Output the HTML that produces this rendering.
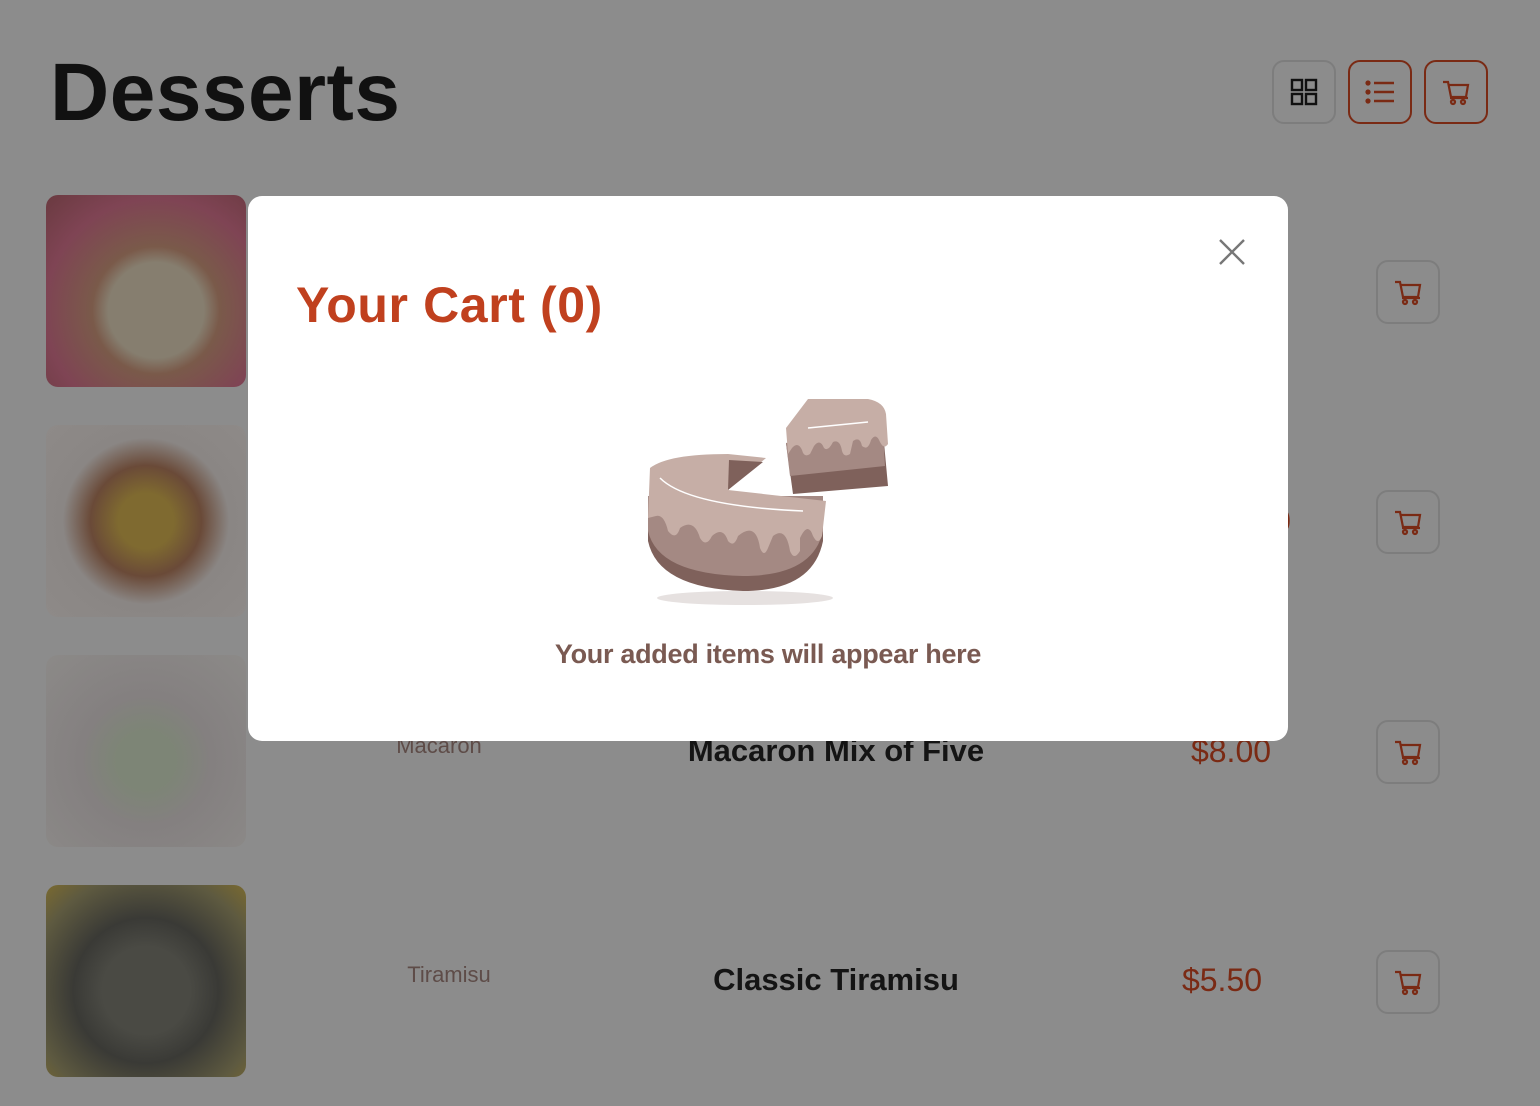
<!DOCTYPE html>
<html><head><meta charset="utf-8"><style>
*{margin:0;padding:0;box-sizing:border-box}
body{width:1540px;height:1106px;background:#8c8c8c;font-family:"Liberation Sans",sans-serif;position:relative;overflow:hidden}
h1{position:absolute;left:50px;top:46px;font-size:82px;font-weight:bold;color:#111;letter-spacing:0.5px}
.tb{position:absolute;top:60px;width:64px;height:64px;border-radius:12px;border:2px solid #7a2a14;display:flex;align-items:center;justify-content:center}
.img{position:absolute;left:46px;width:200px;height:192px;border-radius:12px}
.cb{position:absolute;left:1376px;width:64px;height:64px;border-radius:12px;border:2px solid #7d7d7d;display:flex;align-items:center;justify-content:center}
.cat{position:absolute;font-size:22px;color:#5e4c48;transform:translateX(-50%)}
.nm{position:absolute;font-size:31px;font-weight:bold;color:#141414;transform:translateX(-50%)}
.pr{position:absolute;font-size:32px;color:#7a2a14;transform:translateX(-50%)}
.modal{position:absolute;left:248px;top:196px;width:1040px;height:545px;background:#fff;border-radius:14px}
</style></head><body>
<h1>Desserts</h1>
<div class="tb" style="left:1272px;border-color:#7d7d7d"><svg width="30" height="30" viewBox="0 0 30 30" fill="none" stroke="#111" stroke-width="2.4"><rect x="3" y="3" width="10" height="10"/><rect x="17" y="3" width="10" height="10"/><rect x="3" y="17" width="10" height="10"/><rect x="17" y="17" width="10" height="10"/></svg></div>
<div class="tb" style="left:1348px"><svg width="32" height="30" viewBox="0 0 32 30" fill="#7a2a14" stroke="#7a2a14" stroke-width="2.4"><circle cx="4" cy="6" r="1.4"/><circle cx="4" cy="15" r="1.4"/><circle cx="4" cy="24" r="1.4"/><path d="M10 6h20M10 15h20M10 24h20" fill="none"/></svg></div>
<div class="tb" style="left:1424px"><svg width="30" height="30" viewBox="0 0 30 30" fill="none" stroke="#7a2a14" stroke-width="2.2"><path d="M2 5h5l3 15h15l2-12H8"/><path d="M9 21h18"/><circle cx="12" cy="25" r="2"/><circle cx="22" cy="25" r="2"/></svg></div>

<div class="img" style="top:195px;background:radial-gradient(circle at 55% 60%,#867e6f 0 30%,#7a5a4a 40%,#7f4454 70%,#6a3a40)"></div>
<div class="img" style="top:425px;background:radial-gradient(circle at 50% 50%,#7f6a30 0 20%,#6a4a38 40%,#8a8684 60%,#8e8a88)"></div>
<div class="img" style="top:655px;background:radial-gradient(circle at 50% 55%,#7d8576 0 20%,#848080 45%,#8c8a88)"></div>
<div class="img" style="top:885px;background:radial-gradient(circle at 50% 55%,#4a4a44 0 30%,#3a3a36 50%,#5e5a40 80%,#7a6a30)"></div>

<div class="cb" style="top:260px"><svg width="30" height="30" viewBox="0 0 30 30" fill="none" stroke="#7a2a14" stroke-width="2.2"><path d="M2 5h5l3 15h15l2-12H8"/><path d="M9 21h18"/><circle cx="12" cy="25" r="2"/><circle cx="22" cy="25" r="2"/></svg></div>
<div class="cb" style="top:490px"><svg width="30" height="30" viewBox="0 0 30 30" fill="none" stroke="#7a2a14" stroke-width="2.2"><path d="M2 5h5l3 15h15l2-12H8"/><path d="M9 21h18"/><circle cx="12" cy="25" r="2"/><circle cx="22" cy="25" r="2"/></svg></div>
<div class="cb" style="top:720px"><svg width="30" height="30" viewBox="0 0 30 30" fill="none" stroke="#7a2a14" stroke-width="2.2"><path d="M2 5h5l3 15h15l2-12H8"/><path d="M9 21h18"/><circle cx="12" cy="25" r="2"/><circle cx="22" cy="25" r="2"/></svg></div>
<div class="cb" style="top:950px"><svg width="30" height="30" viewBox="0 0 30 30" fill="none" stroke="#7a2a14" stroke-width="2.2"><path d="M2 5h5l3 15h15l2-12H8"/><path d="M9 21h18"/><circle cx="12" cy="25" r="2"/><circle cx="22" cy="25" r="2"/></svg></div>

<div class="pr" style="left:1282px;top:503px">0</div>
<div class="cat" style="left:439px;top:733px">Macaron</div>
<div class="nm" style="left:836px;top:733px">Macaron Mix of Five</div>
<div class="pr" style="left:1231px;top:733px">$8.00</div>
<div class="cat" style="left:449px;top:962px">Tiramisu</div>
<div class="nm" style="left:836px;top:962px">Classic Tiramisu</div>
<div class="pr" style="left:1222px;top:962px">$5.50</div>

<div class="modal">
<svg style="position:absolute;left:970px;top:42px" width="28" height="28" viewBox="0 0 28 28" stroke="#777" stroke-width="2.4"><path d="M2 2l24 24M26 2L2 26"/></svg>
<div style="position:absolute;left:48px;top:80px;font-size:50px;font-weight:bold;color:#c0401e;letter-spacing:0.6px">Your Cart (0)</div>
<svg style="position:absolute;left:382px;top:200px" width="260" height="215" viewBox="382 200 260 215">
<ellipse cx="497" cy="402" rx="88" ry="7" fill="#e6e1e0"/>
<path d="M400 300 L400 345 Q410 392 495 395 Q565 395 575 345 L575 300Z" fill="#7f615b"/>
<path d="M400 300 L400 335 Q410 378 495 380 Q565 380 575 335 L575 300Z" fill="#a48983"/>
<path d="M402 272 Q420 258 480 258 L518 262 L480 294 L578 305 L574 340 Q570 350 565 340 Q560 325 552 342 L552 355 Q546 365 542 355 Q538 330 525 340 L520 352 Q516 362 512 352 Q508 325 490 340 Q486 352 480 345 Q475 330 464 340 Q458 352 452 342 Q446 322 432 332 Q428 345 420 335 Q416 318 408 320 L400 322Z" fill="#c6aea6"/>
<path d="M481 264 L515 266 L480 294Z" fill="#7f615b"/>
<path d="M412 282 Q440 310 555 315" stroke="#fff" stroke-width="1.5" fill="none"/>
<path d="M538 247 L545 298 L640 290 L635 236Z" fill="#7f615b"/>
<path d="M538 247 L542 280 L637 270 L635 236Z" fill="#a48983"/>
<path d="M538 232 L560 203 L620 203 Q636 206 638 218 L640 248 Q636 254 632 246 Q628 236 623 244 Q620 255 614 250 Q612 240 605 245 L602 258 Q596 262 594 255 Q592 243 585 246 Q580 256 576 252 Q572 242 566 250 L562 258 Q556 262 554 254 Q550 245 544 252 L540 258Z" fill="#c6aea6"/>
<path d="M560 232 L620 226" stroke="#fff" stroke-width="1.5"/>
</svg>
<div style="position:absolute;left:0;width:1040px;text-align:center;top:443px;font-size:27px;font-weight:bold;color:#7a5a52;letter-spacing:-0.3px">Your added items will appear here</div>
</div>
</body></html>
